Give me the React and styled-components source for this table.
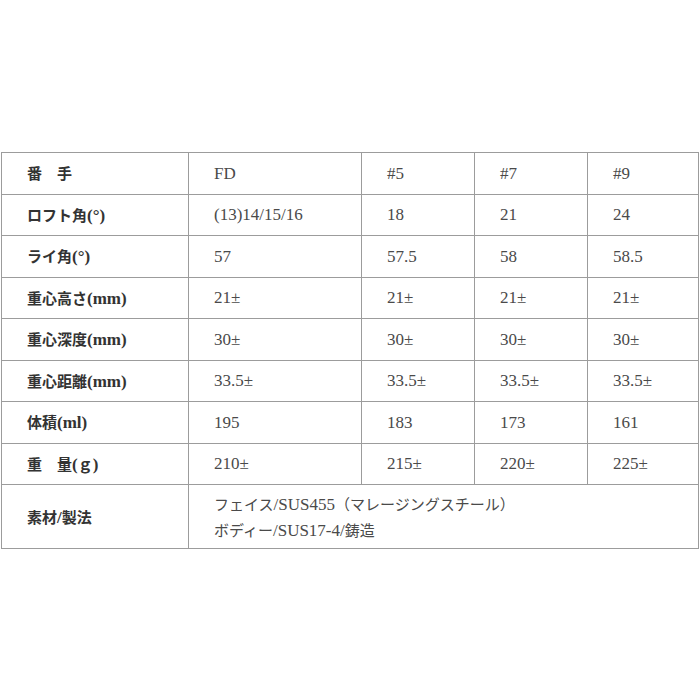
import React from "react";
import styled, { createGlobalStyle } from "styled-components";

const Global = createGlobalStyle`
  html, body { margin: 0; padding: 0; background: #fff; }
  body { font-family: "Liberation Serif", "Noto Sans CJK JP", serif; }
`;

const Page = styled.div`
  width: 700px;
  height: 700px;
  display: flex;
  align-items: center;
  justify-content: center;
  background: #fff;
`;

const Table = styled.table`
  width: 697px;
  border-collapse: collapse;
  table-layout: fixed;
  border: 1px solid #9c9c9c;
  margin-top: 1px;
`;

const Row = styled.tr`
  height: ${(p) => (p.$tall ? "64px" : "41.5px")};
`;

const Cell = styled.td`
  border: 1px solid #9c9c9c;
  padding: 0 0 0 25px;
  vertical-align: middle;
  font-family: "Liberation Serif", "Noto Sans CJK JP", serif;
  font-size: 17px;
  line-height: 25px;
  color: ${(p) => (p.$label ? "#333" : "#4a4a4a")};
  font-weight: ${(p) => (p.$label ? 700 : 400)};
  white-space: nowrap;
`;

const Jp = styled.span`
  font-family: "Noto Sans CJK JP", sans-serif;
  font-size: 15px;
  font-weight: ${(p) => (p.$label ? 600 : 400)};
`;

const Line = styled.div`
  display: block;
`;

const CJK = /([\u3000-\u30ff\u3400-\u9fff\uff00-\uffef]+)/;

function Txt({ children, label }) {
  const parts = String(children).split(CJK);
  return parts.map((p, i) =>
    i % 2 === 1 ? (
      <Jp key={i} $label={label}>
        {p}
      </Jp>
    ) : (
      <React.Fragment key={i}>{p}</React.Fragment>
    )
  );
}

const rows = [
  ["番　手", "FD", "#5", "#7", "#9"],
  ["ロフト角(°)", "(13)14/15/16", "18", "21", "24"],
  ["ライ角(°)", "57", "57.5", "58", "58.5"],
  ["重心高さ(mm)", "21±", "21±", "21±", "21±"],
  ["重心深度(mm)", "30±", "30±", "30±", "30±"],
  ["重心距離(mm)", "33.5±", "33.5±", "33.5±", "33.5±"],
  ["体積(ml)", "195", "183", "173", "161"],
  ["重　量(ｇ)", "210±", "215±", "220±", "225±"],
];

const widths = [187, 173, 113, 113, 111];

export default function App() {
  return (
    <>
      <Global />
      <Page>
        <Table>
          <colgroup>
            {widths.map((w, i) => (
              <col key={i} style={{ width: w }} />
            ))}
          </colgroup>
          <tbody>
            {rows.map((r, i) => (
              <Row key={i}>
                {r.map((c, j) => (
                  <Cell key={j} $label={j === 0}>
                    <Txt label={j === 0}>{c}</Txt>
                  </Cell>
                ))}
              </Row>
            ))}
            <Row $tall>
              <Cell $label>
                <Txt label>素材/製法</Txt>
              </Cell>
              <Cell colSpan={4}>
                <Line>
                  <Txt>フェイス/SUS455（マレージングスチール）</Txt>
                </Line>
                <Line>
                  <Txt>ボディー/SUS17-4/鋳造</Txt>
                </Line>
              </Cell>
            </Row>
          </tbody>
        </Table>
      </Page>
    </>
  );
}
